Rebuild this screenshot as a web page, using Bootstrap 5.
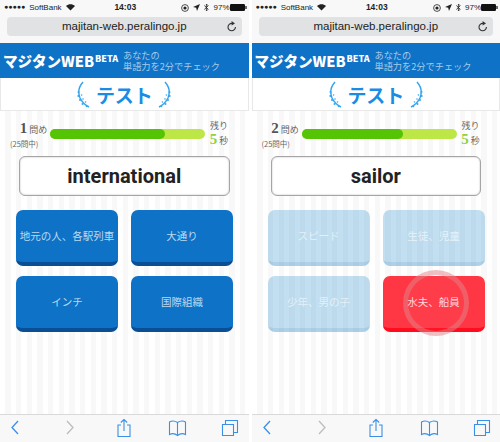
<!DOCTYPE html>
<html lang="ja">
<head>
  <meta charset="UTF-8">
  <meta name="viewport" content="width=device-width, initial-scale=1.0">
  <title>マジタンWEB</title>
  <link rel="stylesheet" href="https://cdn.jsdelivr.net/npm/bootstrap@5.3.0/dist/css/bootstrap.min.css" />
  <style>
    html, body { height: 442px; overflow: hidden; }
    body {
      width: 500px;
      background: #fff;
      font-family: "Noto Sans CJK JP", "Liberation Sans", sans-serif;
    }
    .shot-wrap { gap: 3px; height: 442px; }
    .phone { width: 248.5px; height: 442px; background: #f8f8f8; }
    .status-line {
      height: 15px;
      padding: 0 2px 0 4px;
      font-family: "Liberation Sans", sans-serif;
      font-size: 8px;
      color: #222;
    }
    .status-line .clock { font-size: 8.5px; font-weight: 700; width: 30px; text-align: center; }
    .dots { letter-spacing: 0; font-size: 7px; margin-right: 4px; }
    .url-holder { padding: 2px 7px 0; height: 28px; }
    .url-bar {
      height: 19px;
      background: #e1e2e4;
      border-radius: 4px;
      font-family: "Liberation Sans", sans-serif;
      font-size: 11.5px;
      color: #222;
      position: relative;
    }
    .url-bar svg { position: absolute; right: 5px; top: 4px; }
    .brand-head {
      height: 35px;
      background: #0e72c6;
      color: #fff;
      padding-left: 3px;
      white-space: nowrap;
    }
    .brand-name { font-size: 14.6px; font-weight: 900; width: 90px; }
    .brand-beta { font-size: 9px; font-weight: 900; margin: -3px 0 0 2px; width: 27px; }
    .brand-sub { font-size: 9.2px; line-height: 11px; color: #a5cbea; margin-left: 1px; }
    .title-band {
      height: 33px;
      background: #fff;
      border: 1px solid #e8e8e8;
      border-top: 0;
      gap: 5px;
    }
    .title-text { font-size: 19px; font-weight: 700; color: #1a8ce4; line-height: 1; letter-spacing: -.2px; margin-top: 1px; }
    .quiz-area {
      height: 303px;
      background: repeating-linear-gradient(90deg, #fff 0, #fff 5.33px, #f8f8f8 5.33px, #f8f8f8 10.67px);
      padding: 10px 16px 0;
    }
    .count-left { width: 31px; margin-left: 2px; font-size: 9px; color: #666; line-height: 1; }
    .count-left b { font-family: "Liberation Serif", serif; font-size: 15px; color: #555; margin-right: 2px; }
    .count-note { font-size: 7.5px; display: block; margin: 4px 0 0 -8px; white-space: nowrap; text-align: left; }
    .count-right { width: 26px; font-size: 9px; color: #666; text-align: center; line-height: 1; }
    .count-right b { font-family: "Liberation Serif", serif; font-size: 15px; color: #8fd13f; margin-right: 2px; }
    .count-right span { display: block; margin-bottom: 2px; }
    .time-track { height: 10px; width: 155px; background: #bce746; border-radius: 5px; margin: 0 1px; }
    .time-fill { height: 10px; background: #55c404; border-radius: 5px; }
    .word-box {
      height: 40px;
      margin: 8px 3px 14px;
      background: #fff;
      border: 1px solid #a5a5a5;
      border-radius: 6px;
      box-shadow: inset 0 0 2px #bbb;
      font-family: Roboto, sans-serif;
      font-weight: 700;
      font-size: 20px;
      color: #222;
    }
    .answer-grid { display: grid; grid-template-columns: 102px 102px; column-gap: 13px; row-gap: 10px; }
    .answer-btn {
      height: 56px;
      background: #0e72c6;
      border-bottom: 4px solid #0a4f96;
      border-radius: 7px;
      color: #bcd9f0;
      font-size: 10.5px;
      white-space: nowrap;
      position: relative;
    }
    .answer-btn.faded { background: rgba(14, 130, 200, .26); border-bottom-color: rgba(10, 90, 160, .1); color: rgba(255, 255, 255, .6); }
    .answer-btn.wrong { background: #ff3644; border-bottom-color: #ff0c1e; color: #ffd7da; }
    .tap-ring {
      position: absolute;
      left: 20px;
      top: -6px;
      width: 66px;
      height: 66px;
      border-radius: 50%;
      background: rgba(255, 255, 255, .03);
      border: 5px solid rgba(225, 130, 135, .5);
    }
    .safari-bar {
      height: 30px;
      border-top: 1px solid #d9d9d9;
      background: #f8f8f8;
      position: relative;
    }
    .safari-bar svg { position: absolute; top: 5px; fill: none; stroke: #3a8fe8; stroke-width: 1.1; }
  </style>
</head>
<body>
  <div class="shot-wrap d-flex" id="shots"></div>

  <script>
    const laurel = (flip) => `
      <svg width="14" height="27" viewBox="0 0 14 27" ${flip ? 'style="transform:scaleX(-1)"' : ''}>
        <path d="M6 1 C1.5 6 1 12 3 17 C5 21 8 24 12 26" fill="none" stroke="#35a5ee" stroke-width="1.5"/>
        <g fill="#35a5ee">
          <circle cx="1.5" cy="11" r="1"/><circle cx="1.3" cy="15" r="1"/><circle cx="4.6" cy="14" r=".8"/>
          <circle cx="3" cy="19" r="1"/><circle cx="6" cy="18" r=".8"/><circle cx="5.5" cy="23" r="1"/>
          <circle cx="8.5" cy="21" r=".8"/><circle cx="9.5" cy="25.5" r=".8"/>
        </g>
      </svg>`;

    const toolbar = `
      <svg style="left:10px" width="10" height="15" viewBox="0 0 10 15"><path d="M8 1 L2 7.5 L8 14" stroke-width="1.3"/></svg>
      <svg style="left:65px;stroke:#bdbdbd" width="10" height="15" viewBox="0 0 10 15"><path d="M2 1 L8 7.5 L2 14" stroke-width="1.3"/></svg>
      <svg style="left:116px;top:3px" width="16" height="20" viewBox="0 0 16 20"><path d="M5 7 H2 V18.5 H14 V7 H11 M8 13 V1.5 M4.8 4.5 L8 1.5 L11.2 4.5"/></svg>
      <svg style="left:168px;top:5px" width="19" height="17" viewBox="0 0 19 17"><path d="M9.5 2.5 C7 0.8 3.5 0.8 1.5 2 V14.5 C3.5 13.5 7 13.5 9.5 15.5 C12 13.5 15.5 13.5 17.5 14.5 V2 C15.5 0.8 12 0.8 9.5 2.5 Z M9.5 2.5 V15.5"/></svg>
      <svg style="left:221px;top:4px" width="18" height="18" viewBox="0 0 18 18"><path d="M1.5 5.5 H12.5 V16.5 H1.5 Z M4.5 5.5 V1.5 H16.5 V13.5 H12.5"/></svg>`;

    const screens = [
      {
        num: 1, word: 'international', fill: 115,
        answers: ['地元の人、各駅列車', '大通り', 'インチ', '国際組織'], picked: -1
      },
      {
        num: 2, word: 'sailor', fill: 101,
        answers: ['スピード', '生徒、児童', '少年、男の子', '水夫、船員'], picked: 3
      }
    ];

    document.getElementById('shots').innerHTML = screens.map((s) => `
      <div class="phone">
        <div class="status-line d-flex align-items-center justify-content-between">
          <div class="d-flex align-items-center" style="width:84px">
            <span class="dots">●●●●●</span>SoftBank
            <svg class="ms-1" width="9" height="7" viewBox="0 0 9 7"><path d="M4.5 6.5 L0 2 C2.5 -0.4 6.5 -0.4 9 2 Z" fill="#222"/></svg>
          </div>
          <span class="clock">14:03</span>
          <div class="d-flex align-items-center justify-content-end" style="width:84px">
            <svg width="8" height="8" viewBox="0 0 8 8"><circle cx="4" cy="4" r="3.4" fill="none" stroke="#222" stroke-width=".8"/><circle cx="4" cy="4" r="1.6" fill="#222"/></svg>
            <svg class="ms-1" width="7" height="7" viewBox="0 0 7 7"><path d="M7 0 L0 3 L3.2 3.8 L4 7 Z" fill="#222"/></svg>
            <svg class="ms-1" width="5" height="9" viewBox="0 0 5 9"><path d="M0.3 2.5 L4.2 6.2 L2.4 8 V1 L4.2 2.8 L0.3 6.5" fill="none" stroke="#222" stroke-width=".8"/></svg>
            <span class="ms-1">97%</span>
            <svg class="ms-0" width="17" height="7" viewBox="0 0 17 7"><rect x="0" y="0" width="15" height="7" rx="1.2" fill="#111"/><rect x="15.4" y="2" width="1.2" height="3" fill="#111"/></svg>
          </div>
        </div>
        <div class="url-holder">
          <div class="url-bar d-flex align-items-center justify-content-center">
            majitan-web.peralingo.jp
            <svg width="10" height="11" viewBox="0 0 10 11"><path d="M8.4 6 A3.7 3.7 0 1 1 5 2.4" fill="none" stroke="#333" stroke-width="1.1"/><path d="M4.6 0 L8 2.4 L4.6 4.6 Z" fill="#333"/></svg>
          </div>
        </div>
        <div class="brand-head d-flex align-items-center">
          <span class="brand-name">マジタンWEB</span>
          <span class="brand-beta">BETA</span>
          <span class="brand-sub">あなたの<br>単語力を2分でチェック</span>
        </div>
        <div class="title-band d-flex align-items-center justify-content-center">
          ${laurel(false)}
          <span class="title-text">テスト</span>
          ${laurel(true)}
        </div>
        <div class="quiz-area">
          <div class="d-flex align-items-center">
            <div class="count-left text-center flex-shrink-0"><b>${s.num}</b>問め<span class="count-note">(25問中)</span></div>
            <div class="time-track flex-shrink-0"><div class="time-fill" style="width:${s.fill}px"></div></div>
            <div class="count-right flex-shrink-0"><span>残り</span><b>5</b>秒</div>
          </div>
          <div class="word-box d-flex align-items-center justify-content-center">${s.word}</div>
          <div class="answer-grid">
            ${s.answers.map((a, i) => `
              <div class="answer-btn d-flex align-items-center justify-content-center ${s.picked < 0 ? '' : (i === s.picked ? 'wrong' : 'faded')}">
                ${a}${i === s.picked ? '<span class="tap-ring"></span>' : ''}
              </div>`).join('')}
          </div>
        </div>
        <div class="safari-bar">${toolbar}</div>
      </div>`).join('');
  </script>
  <script src="https://cdn.jsdelivr.net/npm/bootstrap@5.3.0/dist/js/bootstrap.bundle.min.js"></script>
</body>
</html>
